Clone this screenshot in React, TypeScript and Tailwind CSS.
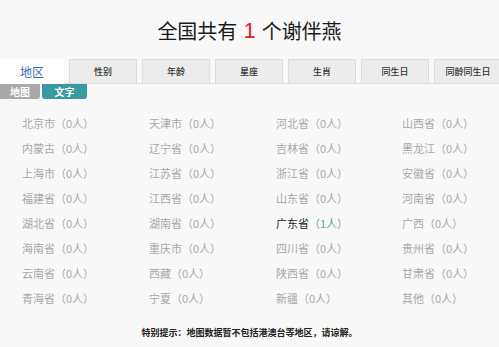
import React from 'react'

type Region = {
  name: string;
  count: number;
}

const regions: Region[] = [
  { name: '北京市', count: 0 }, { name: '天津市', count: 0 }, { name: '河北省', count: 0 }, { name: '山西省', count: 0 },
  { name: '内蒙古', count: 0 }, { name: '辽宁省', count: 0 }, { name: '吉林省', count: 0 }, { name: '黑龙江', count: 0 },
  { name: '上海市', count: 0 }, { name: '江苏省', count: 0 }, { name: '浙江省', count: 0 }, { name: '安徽省', count: 0 },
  { name: '福建省', count: 0 }, { name: '江西省', count: 0 }, { name: '山东省', count: 0 }, { name: '河南省', count: 0 },
  { name: '湖北省', count: 0 }, { name: '湖南省', count: 0 }, { name: '广东省', count: 1 }, { name: '广西', count: 0 },
  { name: '海南省', count: 0 }, { name: '重庆市', count: 0 }, { name: '四川省', count: 0 }, { name: '贵州省', count: 0 },
  { name: '云南省', count: 0 }, { name: '西藏', count: 0 }, { name: '陕西省', count: 0 }, { name: '甘肃省', count: 0 },
  { name: '青海省', count: 0 }, { name: '宁夏', count: 0 }, { name: '新疆', count: 0 }, { name: '其他', count: 0 },
]

const tabs = ['性别', '年龄', '星座', '生肖', '同生日', '同龄同生日']

const App = () => {
  return (
    <div className="w-[499px] h-[347px] overflow-hidden bg-[#f8f8f8] font-['Noto_Sans_CJK_SC',sans-serif]">
      {/* title */}
      <div className="h-[59px] flex items-center justify-center pt-[3px] text-[20px] text-[#1a1a1a] leading-none">
        <span>全国共有</span>
        <span className="mx-[6px] text-[#e3211f] font-['Liberation_Sans',sans-serif] text-[22px]">1</span>
        <span>个谢伴燕</span>
      </div>

      {/* tabs */}
      <div className="h-[25px] flex gap-[5px] border-b border-[#dedede]">
        <div className="w-[64px] shrink-0 bg-white flex items-center justify-center text-[12px] text-[#3b6cb5] -mb-px">
          地区
        </div>
        {tabs.map((t) => (
          <div key={t} className="w-[68px] shrink-0 bg-[#ececec] border border-b-0 border-[#dcdcdc] flex items-center justify-center text-[9px] font-medium text-[#333]">
            {t}
          </div>
        ))}
      </div>

      {/* sub tabs */}
      <div className="h-[15px] flex gap-[2px] text-[10px] font-bold text-white leading-none">
        <div className="w-[40px] bg-[#a9a9a9] rounded-br-[3px] flex items-center justify-center">地图</div>
        <div className="w-[45px] bg-[#3a9aa3] rounded-b-[3px] flex items-center justify-center">文字</div>
      </div>

      {/* region list */}
      <div className="mt-[12px] pl-[22px] grid grid-cols-[127px_127px_126px_100px] text-[11px] text-[#a8a8a8]">
        {regions.map((r) => (
          <div key={r.name} className="h-[25px] flex items-center whitespace-nowrap">
            {r.count > 0 ? (
              <>
                <span className="text-[#222]">{r.name}</span>
                <span className="text-[#5aa9ad]">（{r.count}人）</span>
              </>
            ) : (
              <span>{r.name}（{r.count}人）</span>
            )}
          </div>
        ))}
      </div>

      {/* note */}
      <div className="mt-[16px] text-center text-[9px] font-bold text-[#222] leading-[12px]">
        特别提示：地图数据暂不包括港澳台等地区，请谅解。
      </div>
    </div>
  )
}

export default App
